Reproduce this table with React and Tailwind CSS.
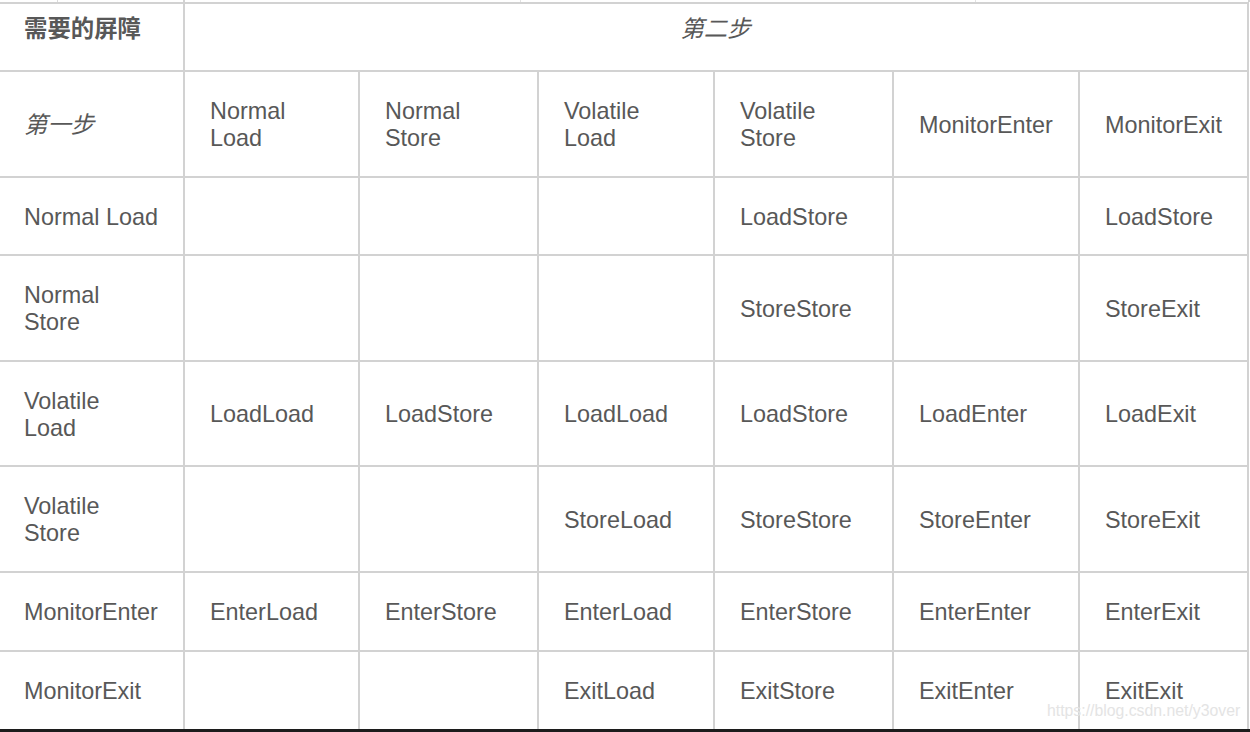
import React from "react";

const cols = ["Normal\nLoad", "Normal\nStore", "Volatile\nLoad", "Volatile\nStore", "MonitorEnter", "MonitorExit"];
const rows = [
  { label: "Normal Load", cells: ["", "", "", "LoadStore", "", "LoadStore"] },
  { label: "Normal\nStore", cells: ["", "", "", "StoreStore", "", "StoreExit"] },
  { label: "Volatile\nLoad", cells: ["LoadLoad", "LoadStore", "LoadLoad", "LoadStore", "LoadEnter", "LoadExit"] },
  { label: "Volatile\nStore", cells: ["", "", "StoreLoad", "StoreStore", "StoreEnter", "StoreExit"] },
  { label: "MonitorEnter", cells: ["EnterLoad", "EnterStore", "EnterLoad", "EnterStore", "EnterEnter", "EnterExit"] },
  { label: "MonitorExit", cells: ["", "", "ExitLoad", "ExitStore", "ExitEnter", "ExitExit"] },
];

function Txt({ t }) {
  const parts = t.split("\n");
  return (
    <span>
      {parts.map((p, i) => (
        <React.Fragment key={i}>
          {i > 0 && <br />}
          {p}
        </React.Fragment>
      ))}
    </span>
  );
}

function Cell({ t, className = "pl-[25px]" }) {
  return (
    <div className={"bg-white flex items-center pt-[2px] " + className}>
      <Txt t={t} />
    </div>
  );
}

export default function App() {
  return (
    <div
      className="relative w-[1250px] h-[732px] bg-white overflow-hidden text-[#585858] text-[23.4px] leading-[27px]"
      style={{ fontFamily: '"Liberation Sans", "Noto Sans CJK SC", Arial, sans-serif' }}
    >
      {/* top sliver of previous row */}
      <div className="flex h-[2px] bg-white">
        <div className="w-[57px]" />
        <div className="w-[1px] bg-[#dcdcdc]" />
        <div className="w-[125px]" />
        <div className="w-[2px] bg-[#d2d2d2]" />
        <div className="w-[335px]" />
        <div className="w-[1px] bg-[#e2e2e2]" />
        <div className="w-[454px]" />
        <div className="w-[1px] bg-[#e2e2e2]" />
        <div className="w-[272px]" />
        <div className="w-[2px] bg-[#d2d2d2]" />
      </div>
      <div className="w-[1249px] bg-[#d2d2d2] pt-[2px] pr-[2px]">
        <div className="grid gap-[2px] grid-cols-[183px_173px_177px_174px_177px_184px_167px] grid-rows-[66px_104px_76px_104px_103px_104px_77px_77px]">
          <div className="bg-white pl-6 pt-[12px] font-bold">需要的屏障</div>
          <div className="bg-white col-span-6 flex justify-center pt-[12px] italic">
            <span className="pr-[1px]">第二步</span>
          </div>

          <Cell t="第一步" className="italic pl-6" />
          {cols.map((c, i) => (
            <Cell key={i} t={c} />
          ))}

          {rows.map((r, ri) => (
            <React.Fragment key={ri}>
              <Cell t={r.label} className="pl-6" />
              {r.cells.map((c, ci) => (
                <Cell key={ci} t={c} />
              ))}
            </React.Fragment>
          ))}
        </div>
      </div>
      <div className="h-[3px] bg-[#1c1c1c]" />
      <div className="absolute left-[1047px] top-[701px] text-[15.8px] leading-[20px] text-[#e4e4e4]">
        https://blog.csdn.net/y3over
      </div>
    </div>
  );
}
